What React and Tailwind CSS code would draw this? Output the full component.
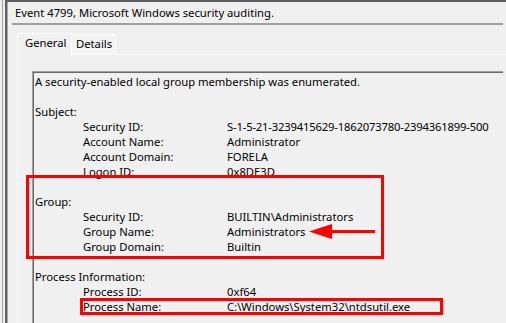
import React from "react";

// event properties, one entry per line of the read-only text box
const sections = [
  { type: "text", text: "A security-enabled local group membership was enumerated." },
  { type: "blank" },
  { type: "head", text: "Subject:" },
  { type: "field", label: "Security ID:", value: "S-1-5-21-3239415629-1862073780-2394361899-500", tight: true },
  { type: "field", label: "Account Name:", value: "Administrator" },
  { type: "field", label: "Account Domain:", value: "FORELA" },
  { type: "field", label: "Logon ID:", value: "0x8DE3D" },
  { type: "blank" },
  { type: "head", text: "Group:" },
  { type: "field", label: "Security ID:", value: "BUILTIN\\Administrators" },
  { type: "field", label: "Group Name:", value: "Administrators" },
  { type: "field", label: "Group Domain:", value: "Builtin" },
  { type: "blank" },
  { type: "head", text: "Process Information:" },
  { type: "field", label: "Process ID:", value: "0xf64" },
  { type: "field", label: "Process Name:", value: "C:\\Windows\\System32\\ntdsutil.exe" },
];

const Line = ({ row }) => {
  if (row.type === "blank") return <div className="h-[15px]" />;
  if (row.type === "field")
    return (
      <div className="flex h-[15px] leading-[15px] whitespace-nowrap">
        <div className="w-[144px] pl-[48px] box-content">{row.label}</div>
        <div className={row.tight ? "tracking-[-0.18px]" : ""}>{row.value}</div>
      </div>
    );
  return <div className="h-[15px] leading-[15px] whitespace-nowrap">{row.text}</div>;
};

export default function App() {
  return (
    <div className="relative flex w-[506px] h-[323px] overflow-hidden bg-[#f0f0f0] text-black font-['Noto_Sans',sans-serif] text-[11.25px]">
      {/* window frame edges on the left */}
      <div className="w-[2px] shrink-0" />
      <div className="w-px shrink-0 bg-[#a0a0a0]" />
      <div className="w-[2px] shrink-0" />

      <div className="flex-1 min-w-0 flex flex-col border-t-2 border-l-2 border-[#5f5f5f]">
        <div className="flex-1 min-w-0 flex flex-col border-l border-[#a8a8a8]">
          {/* title */}
          <div className="h-[21px] leading-[21px] pl-[7px] whitespace-nowrap">
            Event 4799, Microsoft Windows security auditing.
          </div>
          <div className="h-[2px] ml-[4px] mr-[3px] bg-[#a0a0a0]" />

          {/* tabs */}
          <div className="flex items-end ml-[9px] mt-[7px] h-[22px]">
            <div className="h-[22px] w-[55px] pl-[7px] leading-[18px] border-t border-l border-r border-[#fcfcfc] bg-[#f0f0f0] relative z-10 -mb-px">
              General
            </div>
            <div className="h-[20px] w-[44px] pl-[4px] leading-[18px] border-t border-r border-[#fcfcfc] bg-[#f3f3f3]">
              Details
            </div>
          </div>

          {/* tab page */}
          <div className="flex-1 ml-[9px] border-t border-l border-[#fcfcfc]">
            <div className="ml-[14px] mr-[3px] mt-[16px] h-full border-t border-l border-[#a0a0a0]">
              <div className="h-full border-t border-l border-[#696969] pt-[1px] pl-[1px]">
                {sections.map((row, i) => (
                  <Line key={i} row={row} />
                ))}
              </div>
            </div>
          </div>
        </div>
      </div>

      {/* red annotations drawn over the dialog */}
      <div className="absolute left-[26px] top-[175px] w-[358px] h-[84px] border-[3px] border-[#ff0000]" />
      <div className="absolute left-[80px] top-[298px] w-[363px] h-[17px] border-[3px] border-[#ff0000]" />
      <svg className="absolute left-[309px] top-[224px]" width="68" height="15" viewBox="0 0 68 15">
        <polygon points="0,7.5 23,0 23,15" fill="#ff0000" />
        <rect x="22" y="6" width="44" height="3" fill="#ff0000" />
      </svg>
    </div>
  );
}
